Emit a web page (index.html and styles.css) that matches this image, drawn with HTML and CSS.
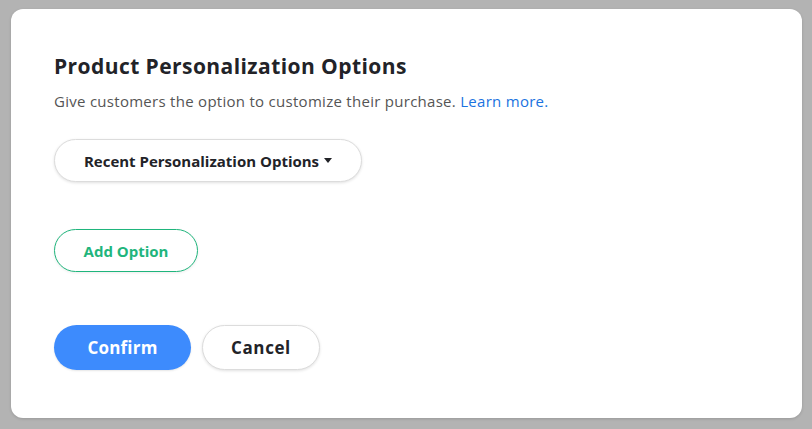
FILE: index.html
```html
<!DOCTYPE html>
<html>
<head>
<meta charset="utf-8">
<link rel="stylesheet" href="styles.css">
</head>
<body>
<div class="card">
  <h1 class="title">Product Personalization Options</h1>
  <p class="sub">Give customers the option to customize their purchase. <a class="link" href="#">Learn more.</a></p>
  <div class="row row-dd">
    <button class="btn btn-dd">Recent Personalization Options <span class="caret"></span></button>
  </div>
  <div class="row row-add">
    <button class="btn btn-add">Add Option</button>
  </div>
  <div class="row row-actions">
    <button class="btn btn-confirm">Confirm</button>
    <button class="btn btn-cancel">Cancel</button>
  </div>
</div>
</body>
</html>
```
FILE: styles.css
```css
html, body { margin: 0; padding: 0; }
body {
  background: #b3b3b3;
  width: 812px;
  height: 429px;
  overflow: hidden;
  font-family: "Open Sans", "Noto Sans", sans-serif;
  padding: 9px 10px 0 11px;
  box-sizing: border-box;
}
.card {
  background: #fff;
  border-radius: 12px;
  height: 409px;
  box-sizing: border-box;
  padding: 43px 43px 0 43px;
  box-shadow: 0 1px 3px rgba(0,0,0,0.15);
}
.title {
  margin: 0;
  font-size: 21px;
  font-weight: 700;
  color: #222328;
  line-height: 28px;
  letter-spacing: 0.43px;
}
.sub {
  margin: 11px 0 0 0;
  font-size: 15px;
  color: #555;
  line-height: 20px;
  letter-spacing: 0.28px;
}
.link { color: #1b73e0; text-decoration: none; }
.row { display: flex; gap: 11px; }
.row-dd { margin-top: 28px; }
.row-add { margin-top: 47px; }
.row-actions { margin-top: 53px; }
.btn {
  font-family: inherit;
  font-weight: 700;
  border-radius: 999px;
  background: #fff;
  cursor: pointer;
  padding: 0;
}
.btn-dd {
  width: 308px;
  height: 43px;
  border: 1px solid #dcdcdc;
  box-shadow: 0 1px 3px rgba(0,0,0,0.12);
  font-size: 15px;
  color: #222328;
  display: flex;
  align-items: center;
  justify-content: center;
  gap: 5px;
}
.caret {
  width: 0; height: 0;
  border-left: 4.5px solid transparent;
  border-right: 4.5px solid transparent;
  border-top: 5px solid #222328;
}
.btn-add {
  width: 144px;
  height: 43px;
  border: 1px solid #1fb57c;
  color: #1fb57c;
  font-size: 15px;
  box-shadow: 0 1px 3px rgba(0,0,0,0.08);
}
.btn-confirm {
  width: 137px;
  height: 45px;
  border: none;
  background: #3d8bfd;
  color: #fff;
  font-size: 17px;
  letter-spacing: 0.2px;
  box-shadow: 0 1px 2px rgba(0,0,0,0.1);
}
.btn-cancel {
  width: 118px;
  height: 45px;
  border: 1px solid #dcdcdc;
  color: #222328;
  font-size: 17px;
  letter-spacing: 0.6px;
  box-shadow: 0 1px 3px rgba(0,0,0,0.12);
}
```
